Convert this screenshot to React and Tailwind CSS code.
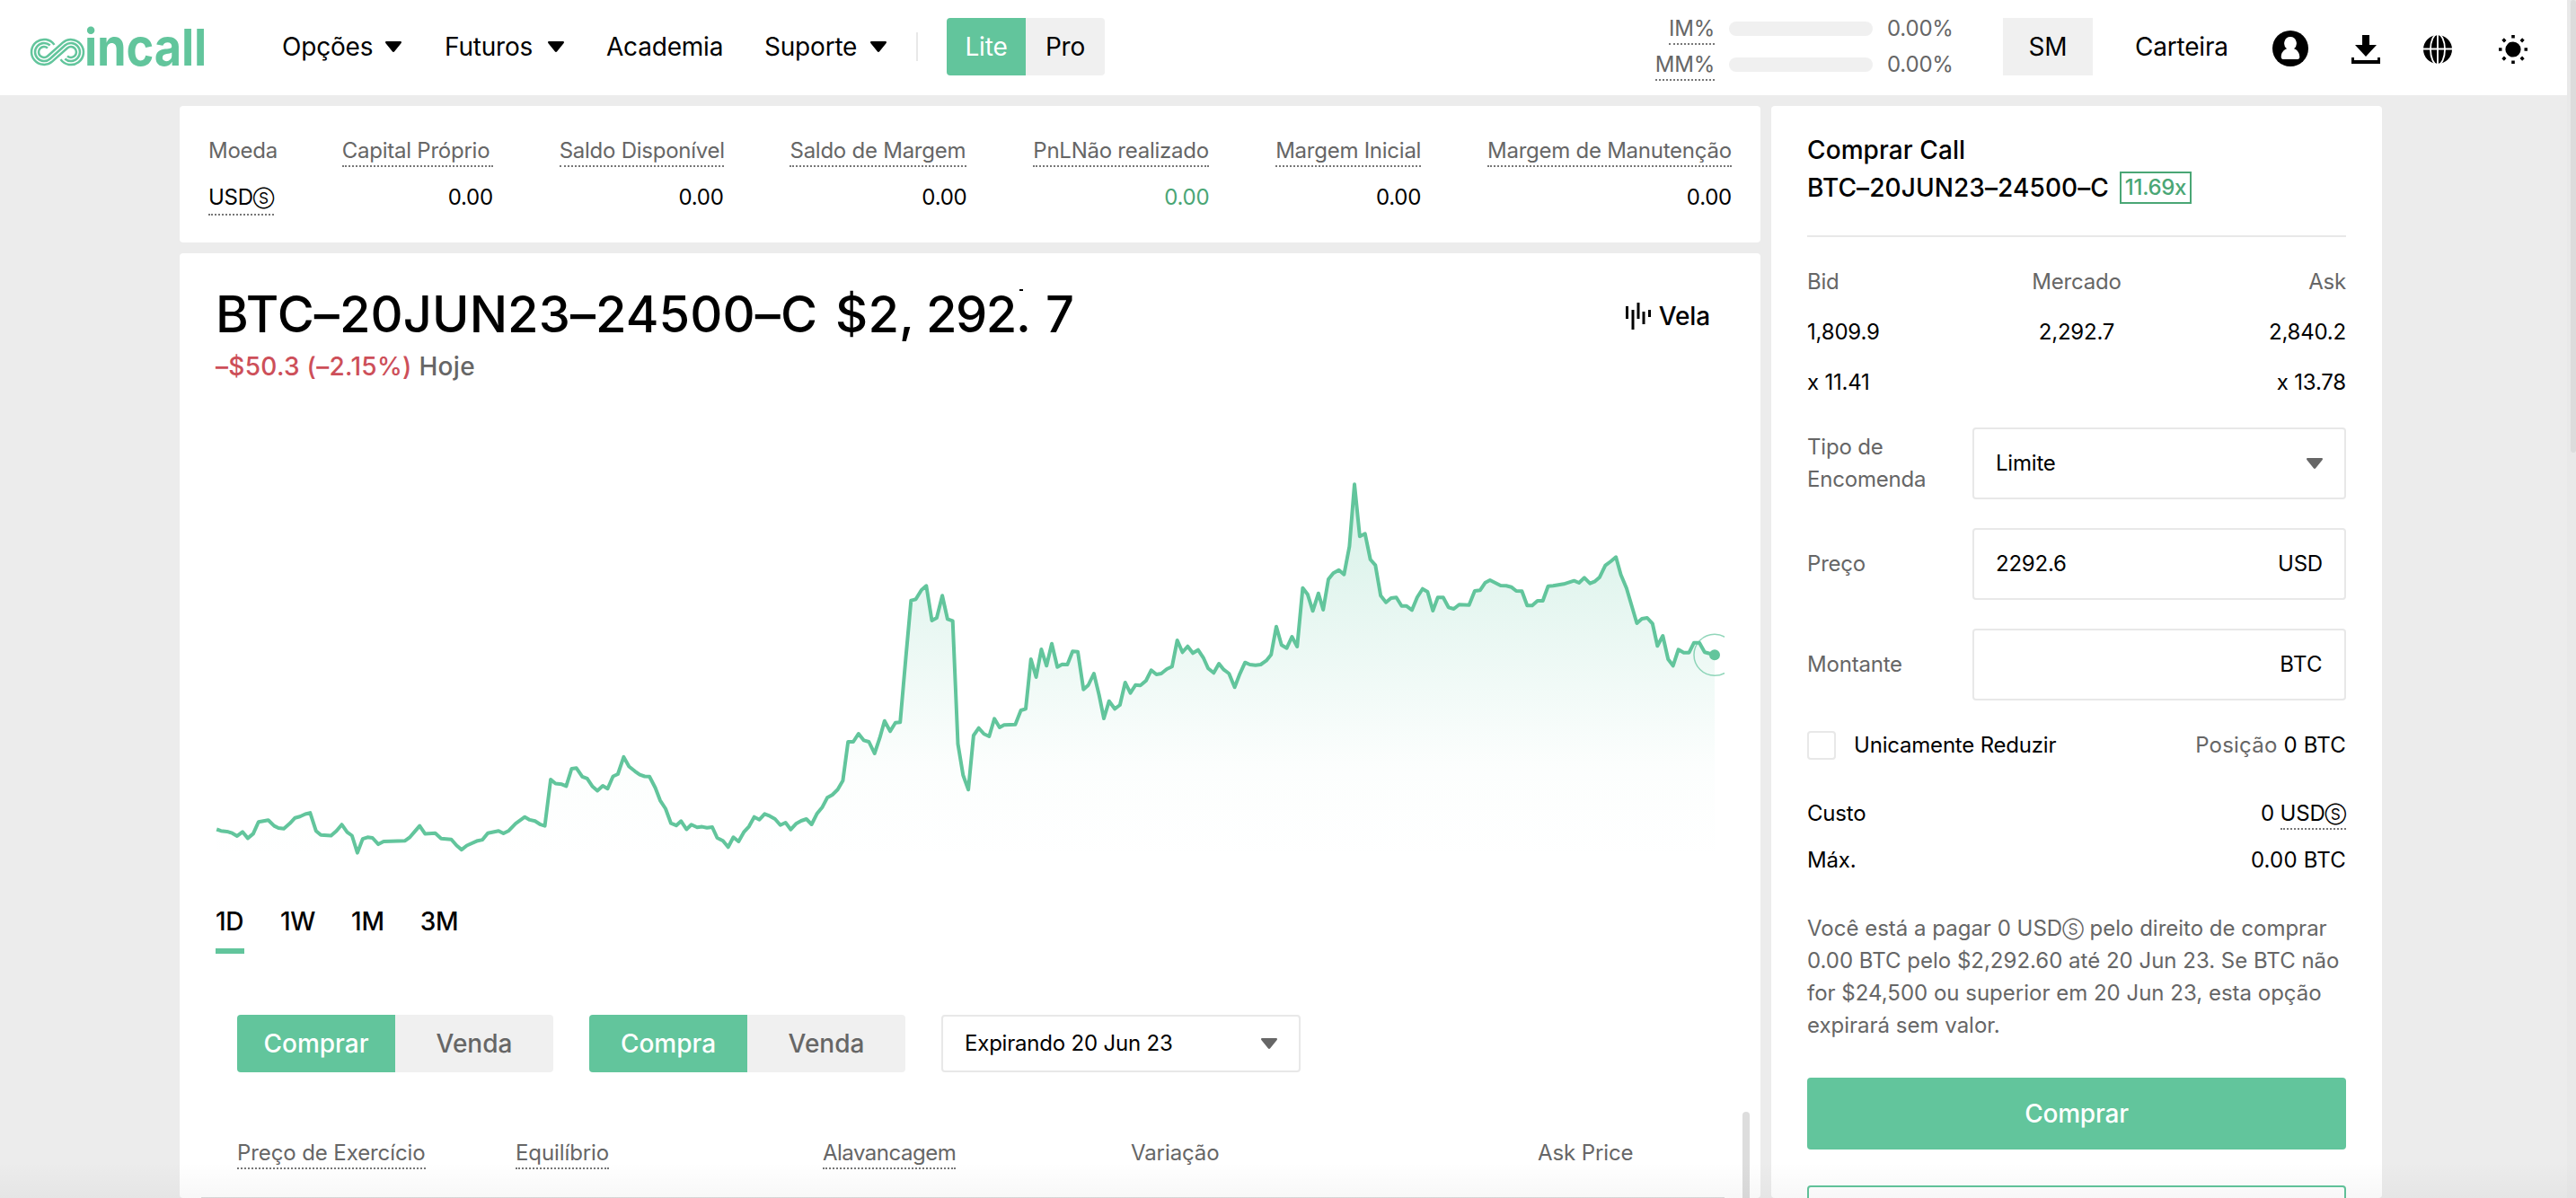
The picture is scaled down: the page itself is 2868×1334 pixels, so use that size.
import React from "react";

const chartPoints =
  "1.2,423.5 6,425.2 12.6,425.9 18.5,427.7 24,430.9 30,426.3 35.9,433.4 41.9,428.4 47.8,415.3 58.7,413.2 65.2,419.6 70,422 76,422.8 82.5,417.1 88.5,410.7 93.9,409.3 99.9,406.5 105.3,405.1 111.8,425.2 117.2,429.8 128.6,430.5 134.6,425.2 140.5,418.2 146.5,426.6 151.9,430.5 157.9,449.6 163.8,434.1 169.2,432.3 174.7,433 181.2,440.1 187.1,436.9 211,436.2 215.9,432.7 221.8,425.9 227.2,419.6 233.2,428.4 244.6,427.7 251.1,433.7 262.5,434.8 268.4,441.5 273.9,446.1 279.8,441.5 291.8,436.2 297.2,435.1 303.1,427.7 315.1,425.2 320.5,428.1 326.5,424.9 334,417.1 344.3,409.7 349.8,412.9 355.7,414.3 361.1,417.8 366.6,419.6 373.1,368 378.5,372.6 385.5,373.3 390.4,375.4 396.4,356 401.8,355.3 408.3,364.8 413.7,366.9 419.7,375.8 425.1,380.4 431.1,375.1 436.5,378.2 442.5,364.5 447.9,362 454.4,342.9 460.3,353.5 466.9,358.8 472.3,362.7 477.7,364.5 483.1,364.8 489.6,377.2 495,391.3 501,400.5 507,416.7 512.9,419.2 518.3,414.3 524.3,423.5 529.7,418.2 536.2,421.3 541.7,420.6 547.1,421.7 553,421 558.5,433 564.9,436.3 570.7,443.3 576.5,432.3 582.3,437 588.1,426.7 593.9,420.3 599.7,409.7 605.5,412.7 611.3,406.3 617.1,408.7 622.9,412 628.8,418.7 634.6,416 640.4,423.7 646.2,417.3 652,414 657.8,412 663.6,418 669.8,405.7 675.6,398.7 681,388.3 686.8,385 692.6,379.3 698.4,369.3 704.2,326 710,326 715.8,317 721.6,324.3 727.4,326 733.7,339 739.5,321.7 744.8,302.7 751.1,314.3 756.9,304.7 762.2,304.3 768.5,232.3 774.3,168.7 779.6,167.3 785.9,157 791.3,152.3 797.5,191 802.9,188 809.1,163.3 814.9,189.3 820.7,191.3 826.5,328.3 832.3,363.3 838.1,379.3 843.9,319 849.7,310.7 855.5,317.3 861.3,320 867.1,300.3 872.9,310 877.9,307.3 890.4,306.7 896.6,291 902,289.3 907.8,234 913.6,254 919.4,223 925.2,241.3 931,216.7 937.2,242.7 942.6,239.7 948.4,240 954.2,225.3 960,225.7 966.3,267.7 971.6,263 977.9,250 983.7,274 989,300 994.8,280.7 1001.1,289.3 1006.9,285 1012.7,260 1018.5,271.7 1024.3,262.7 1029.6,263.3 1035.9,258 1041.7,246.3 1047.5,251 1052.9,250 1059.1,245 1064.9,242.3 1070.7,213 1076.5,226.3 1082.3,219.7 1088.1,227.3 1093.9,223.7 1099.7,232.3 1105.1,244.3 1111.3,249.3 1117.1,239 1122.5,245.7 1128.3,250 1134.6,265.3 1140.4,250.3 1146.2,237.7 1151.5,240 1157.8,240.7 1163.6,240 1169.8,235.7 1175.2,229 1181,197.7 1186.8,218.3 1192.6,221.7 1198.4,209 1204.2,220 1210.4,154.7 1215.8,161.7 1221.6,180.3 1227.9,160.7 1233.2,179 1239,145 1244.4,138.3 1250.6,134.7 1256.4,139.7 1262.4,108.3 1268,39.3 1273.9,97.3 1279.8,94.3 1285.7,123 1291.3,129.3 1297.2,163.3 1303.1,170.7 1308.7,166 1314.6,165.3 1320.5,174.7 1325.7,174.7 1332,179.3 1337.9,165 1343.8,155.7 1349.4,159 1355.3,180 1360.8,165.3 1366.8,165.3 1372.7,176.3 1378.6,178 1384.5,173.3 1395.6,173.7 1401.9,158 1407.8,157.3 1413.7,148.7 1418.9,146 1430.7,152 1437,152.3 1442.6,153.7 1448.1,158 1454.4,158.3 1460.3,174.3 1465.9,174.3 1471.8,169 1477.7,169 1483.6,152.7 1489.2,152.3 1501,150.3 1512.5,146.7 1518,149 1524,143.3 1530.2,149.7 1535.8,147.3 1541,142.7 1547.3,129.7 1553.5,125 1559.1,120.3 1564.6,140 1570.9,155 1582.4,194 1588,189 1593.9,188 1599.8,194.3 1605.3,219.3 1611.3,208 1617.2,234 1622.7,241.3 1628.6,223.3 1634.6,226.7 1640.5,226.7 1646,215.7 1652,215.7 1657.9,226.3 1669,229.3";

const Caret = ({ className = "" }) => (
  <svg viewBox="0 0 18 12" className={`w-[18px] h-3 shrink-0 ${className}`} fill="currentColor">
    <path d="M1.2 0h15.6c1 0 1.5 1 .9 1.900L10.200 11.300c-.6.9-1.800.9-2.400 0L.3 1.900C-.3 1 .2 0 1.200 0z" />
  </svg>
);

const Logo = () => (
  <svg viewBox="0 0 210 60" className="w-[210px] h-[60px] overflow-visible" fill="none">
    <g stroke="#62c59c" strokeWidth="2.500">
      <path d="M26.500 21.900A14 14 0 1 0 24.300 40.400L41 25.500A6 6 0 1 1 41 34.500" />
      <path d="M21.700 22.500A10 10 0 1 0 21.700 37.450L38.300 22.550A10 10 0 1 1 38.300 37.500" />
      <path d="M19 25.500A6 6 0 1 0 19 34.500L35.700 19.600A14 14 0 1 1 33.500 38.100" />
    </g>
    <text x="60" y="45" textLength="136" lengthAdjust="spacingAndGlyphs" fill="#62c59c" className="font-['Inter',sans-serif] font-bold text-[57px]">
      incall
    </text>
  </svg>
);

const UserIcon = () => (
  <svg viewBox="0 0 40 40" className="w-10 h-10">
    <circle cx="20" cy="20" r="20" />
    <path fill="#fff" d="M20 7a6.800 7.300 0 0 1 4 13.200c3.800 1.300 6.300 4.700 6.300 9.300 0 1.600-.9 2.500-2.300 2.500H12c-1.400 0-2.300-.9-2.300-2.500 0-4.600 2.500-8 6.300-9.300A6.800 7.300 0 0 1 20 7z" />
  </svg>
);

const DownloadIcon = () => (
  <svg viewBox="0 0 32 32" className="w-8 h-8">
    <path d="M12 0h8v11h8L16 24 4 11h8zM0 25h3v3h26v-3h3v7H0z" />
  </svg>
);

const GlobeIcon = () => (
  <svg viewBox="0 0 32 32" className="w-8 h-8">
    <circle cx="16" cy="16" r="16" />
    <g stroke="#fff" strokeWidth="1.800" fill="none">
      <path d="M0 15.500h32M16 0v32" />
      <ellipse cx="16" cy="16" rx="8" ry="17" />
    </g>
  </svg>
);

const SunIcon = () => (
  <svg viewBox="0 0 32 32" className="w-8 h-8" stroke="#000" strokeWidth="3.600">
    <circle cx="16" cy="16" r="8.600" stroke="none" />
    <path d="M16 0v3.500M16 28.500V32M0 16h3.500M28.500 16H32M4.600 4.600l2.600 2.600M24.800 24.800l2.600 2.600M4.600 27.400l2.600-2.600M24.800 7.200l2.600-2.600" />
  </svg>
);

const CandleIcon = () => (
  <svg viewBox="0 0 28 30" className="w-7 h-[30px]" stroke="#000" strokeWidth="3">
    <path d="M1.500 4v14M8 8v22M14 0v18M20 10v14M26.500 8v8" />
  </svg>
);

const Toggle = ({ on, off }) => (
  <div className="flex h-16 rounded overflow-hidden text-[28px] font-medium">
    <div className="w-44 bg-[#62c59c] text-white flex items-center justify-center">{on}</div>
    <div className="w-44 bg-[#f0f0f0] text-[#666] flex items-center justify-center">{off}</div>
  </div>
);

const Dotted = ({ children, className = "" }) => (
  <span className={`border-b-2 border-dotted border-[#777] ${className}`}>{children}</span>
);

const Usds = () => (
  <>
    USD<span className="text-[17px] leading-none relative -top-px">Ⓢ</span>
  </>
);

const Header = () => (
  <header className="h-[106px] w-[2858px] bg-white flex items-start text-[28px] leading-[64px] pt-5 tracking-[-0.2px]">
    <div className="ml-[34px] mt-2 w-[280px]">
      <Logo />
    </div>
    <nav className="flex">
      <div className="flex items-center w-[181px]">
        Opções <Caret className="ml-3.5" />
      </div>
      <div className="flex items-center w-[180px]">
        Futuros <Caret className="ml-[17px]" />
      </div>
      <div className="w-[176px]">Academia</div>
      <div className="flex items-center w-[169px]">
        Suporte <Caret className="ml-[15px]" />
      </div>
    </nav>
    <div className="w-0.5 h-8 mt-4 bg-[#e8e8e8]"></div>
    <div className="ml-8 flex rounded overflow-hidden text-center">
      <div className="w-[88px] bg-[#62c59c] text-white">Lite</div>
      <div className="w-[88px] bg-[#f0f0f0]">Pro</div>
    </div>

    {/* Margin ratios */}
    <div className="ml-auto flex flex-col gap-2 -mt-2 text-2xl leading-8 text-[#666]">
      {["IM%", "MM%"].map((label) => (
        <div key={label} className="flex items-start justify-end h-8">
          <Dotted className="h-[38px] pt-1">{label}</Dotted>
          <div className="w-40 h-4 mt-3 ml-4 shrink-0 rounded-lg bg-[#f0f0f0]"></div>
          <span className="ml-4 w-[129px] pt-1">0.00%</span>
        </div>
      ))}
    </div>
    <div className="w-[100px] bg-[#f0f0f0] text-center">SM</div>
    <div className="w-[105px] ml-[47px] whitespace-nowrap">Carteira</div>
    <div className="flex items-center h-[68px] ml-12 mr-11">
      <UserIcon />
      <div className="ml-12 mt-0.5"><DownloadIcon /></div>
      <div className="ml-12 mt-0.5"><GlobeIcon /></div>
      <div className="ml-[52px] mt-0.5"><SunIcon /></div>
    </div>
  </header>
);

const accountColumns = [
  { label: "Capital Próprio", width: "w-[168px]" },
  { label: "Saldo Disponível", width: "w-[183px]" },
  { label: "Saldo de Margem", width: "w-[197px]" },
  { label: "PnLNão realizado", width: "w-[196px]", green: true },
  { label: "Margem Inicial", width: "w-[162px]" },
  { label: "Margem de Manutenção", width: "w-[272px]" },
];

const AccountCard = () => (
  <section className="h-[152px] bg-white rounded px-8 pt-8 flex justify-between text-2xl leading-9 tracking-[-0.25px] whitespace-nowrap">
    <div className="w-[75px]">
      <div className="text-[#666] h-[52px]">Moeda</div>
      <Dotted className="inline-block h-[38px]"><Usds /></Dotted>
    </div>
    {accountColumns.map((col) => (
      <div key={col.label} className={`flex flex-col items-end ${col.width}`}>
        <div className="h-[52px]">
          <Dotted className={`block h-9 text-[#666] ${col.width}`}>{col.label}</Dotted>
        </div>
        <div className={col.green ? "text-[#4aa675]" : ""}>0.00</div>
      </div>
    ))}
  </section>
);

const PriceChart = () => (
  <svg viewBox="0 0 1680 460" className="block w-[1680px] h-[460px]">
    <defs>
      <linearGradient id="area" gradientUnits="userSpaceOnUse" x1="0" y1="39" x2="0" y2="458">
        <stop offset="0" stopColor="#60c8a4" stopOpacity="0.26" />
        <stop offset="0.75" stopColor="#60c8a4" stopOpacity="0.02" />
        <stop offset="1" stopColor="#60c8a4" stopOpacity="0" />
      </linearGradient>
    </defs>
    <polygon points={`1.2,458 ${chartPoints} 1669,458`} fill="url(#area)" />
    <polyline points={chartPoints} fill="none" stroke="#62c59c" strokeWidth="4" strokeLinejoin="round" />
    <circle cx="1669" cy="229.300" r="6" fill="#62c59c" />
    <circle cx="1669" cy="229.300" r="23" fill="none" stroke="#62c59c" strokeOpacity="0.7" strokeWidth="1.500" />
  </svg>
);

const ChartCard = () => (
  <section className="h-[1052px] bg-white rounded relative overflow-hidden">
    <div className="px-10 pt-[34px] h-[218px]">
      <div className="flex justify-between">
        <h1 className="text-[56px] leading-[68px] font-medium whitespace-nowrap flex tracking-[0.1px]">
          BTC–20JUN23–24500–C
          <span className="ml-5">$2,</span>
          <span className="ml-[13px] tracking-[-1.5px]">292</span>
          <span className="relative">
            .<i className="absolute left-1 top-1.5 w-1 h-0.5 bg-black"></i>
          </span>
          <span className="ml-4">7</span>
        </h1>
        <div className="flex items-center gap-[9px] mr-4 pt-[3px] text-[28px] font-medium tracking-[-0.1px]">
          <CandleIcon />
          Vela
        </div>
      </div>
      <p className="text-[28px] leading-[44px] mt-0.5 font-medium text-[#666] tracking-[0.3px]">
        <span className="text-[#cd4f59]">–$50.3 (–2.15%)</span> Hoje
      </p>
    </div>

    <div className="pl-10 h-[510px]">
      <PriceChart />
    </div>

    <div className="flex gap-10 pl-10 h-[120px] text-[28px] leading-[32px] font-medium tracking-[-0.3px]">
      <div className="w-8 h-[52px] border-b-[6px] border-[#62c59c]">1D</div>
      <div>1W</div>
      <div>1M</div>
      <div>3M</div>
    </div>

    <div className="flex gap-10 pl-16">
      <Toggle on="Comprar" off="Venda" />
      <Toggle on="Compra" off="Venda" />
      <div className="w-[400px] h-16 rounded border-2 border-[#e8e8e8] pl-6 pr-6 flex items-center justify-between text-2xl tracking-[-0.2px]">
        Expirando 20 Jun 23
        <Caret className="text-[#666]" />
      </div>
    </div>

    <div className="flex mt-[72px] ml-6 mr-10 h-[67px] pl-10 text-2xl leading-9 tracking-[-0.1px] text-[#666] whitespace-nowrap">
      <div className="w-[310px]"><Dotted className="inline-block h-9">Preço de Exercício</Dotted></div>
      <div className="w-[342px]"><Dotted className="inline-block h-9">Equilíbrio</Dotted></div>
      <div className="w-[343px]"><Dotted className="inline-block h-9 tracking-[-0.5px]">Alavancagem</Dotted></div>
      <div className="w-[453px]">Variação</div>
      <div>Ask Price</div>
    </div>
    <div className="h-px ml-6 mr-10 bg-[#dcdcdc]"></div>

    {/* List scrollbar */}
    <div className="absolute right-3 top-[956px] w-2 h-[120px] rounded bg-[#ddd]"></div>
  </section>
);

const Field = ({ label, value, children }) => (
  <div className="flex items-center h-20 mb-8">
    <div className="w-[184px] pr-10 text-[#666]">{label}</div>
    <div className="w-[416px] h-20 rounded border-2 border-[#e8e8e8] px-6 flex items-center justify-between">
      <span>{value}</span>
      {children}
    </div>
  </div>
);

const OrderCard = () => (
  <aside className="w-[680px] h-[1216px] bg-white rounded px-10 pt-7 text-2xl leading-9 tracking-[-0.2px]">
    <div className="text-[28px] leading-[42px] font-medium whitespace-nowrap tracking-[0.1px]">
      <div>Comprar Call</div>
      <div className="flex items-center">
        BTC–20JUN23–24500–C
        <span className="ml-3 h-9 w-20 border-2 border-[#4aa675] text-[#4aa675] text-2xl leading-8 text-center tracking-[-0.3px]">11.69x</span>
      </div>
    </div>
    <div className="h-0.5 mt-8 bg-[#e8e8e8]"></div>

    <div className="grid grid-cols-3 mt-[22px] leading-[56px]">
      <div className="text-[#666]">Bid</div>
      <div className="text-[#666] text-center">Mercado</div>
      <div className="text-[#666] text-right">Ask</div>
      <div>1,809.9</div>
      <div className="text-center">2,292.7</div>
      <div className="text-right">2,840.2</div>
      <div>x 11.41</div>
      <div></div>
      <div className="text-right">x 13.78</div>
    </div>

    <div className="mt-[22px]">
      <Field label="Tipo de Encomenda" value="Limite">
        <Caret className="text-[#666]" />
      </Field>
      <Field label="Preço" value="2292.6">USD</Field>
      <Field label="Montante" value="">
        <span className="tracking-[0.4px]">BTC</span>
      </Field>
    </div>

    <div className="flex items-center mt-8">
      <div className="w-8 h-8 border-2 border-[#e8e8e8] rounded"></div>
      <span className="ml-5">Unicamente Reduzir</span>
      <span className="ml-auto tracking-[0.2px]"><span className="text-[#666]">Posição</span> 0 BTC</span>
    </div>

    <div className="flex justify-between mt-10 h-[52px]">
      <span>Custo</span>
      <span>0 <Dotted className="inline-block h-9"><Usds /></Dotted></span>
    </div>
    <div className="flex justify-between">
      <span>Máx.</span>
      <span className="tracking-[0.2px]">0.00 BTC</span>
    </div>

    <p className="mt-10 text-[#666] whitespace-nowrap tracking-normal">
      Você está a pagar 0 <Usds /> pelo direito de comprar<br />
      0.00 BTC pelo $2,292.60 até 20 Jun 23. Se BTC não<br />
      for $24,500 ou superior em 20 Jun 23, esta opção<br />
      expirará sem valor.
    </p>

    <div className="mt-10 h-20 rounded bg-[#62c59c] text-white text-[28px] font-medium leading-[80px] text-center">Comprar</div>
    <div className="mt-10 h-20 rounded border-2 border-[#62c59c]"></div>
  </aside>
);

const App = () => {
  return (
    <div className="relative w-[2868px] h-[1334px] overflow-hidden bg-[#ececec] text-black font-['Inter','Noto_Sans_CJK_SC',sans-serif]">
      <Header />
      <main className="flex gap-3 pl-[200px] pt-3">
        <div className="w-[1760px] flex flex-col gap-3">
          <AccountCard />
          <ChartCard />
        </div>
        <OrderCard />
      </main>

      {/* Page scrollbar */}
      <div className="absolute right-0 top-0 w-2.5 h-full bg-[#e9e9e9]">
        <div className="ml-1 h-[504px] rounded bg-[#dcdcdc]"></div>
      </div>
      <div className="absolute inset-x-0 bottom-0 h-10 bg-linear-to-b from-transparent to-black/3"></div>
    </div>
  );
};

export default App;
